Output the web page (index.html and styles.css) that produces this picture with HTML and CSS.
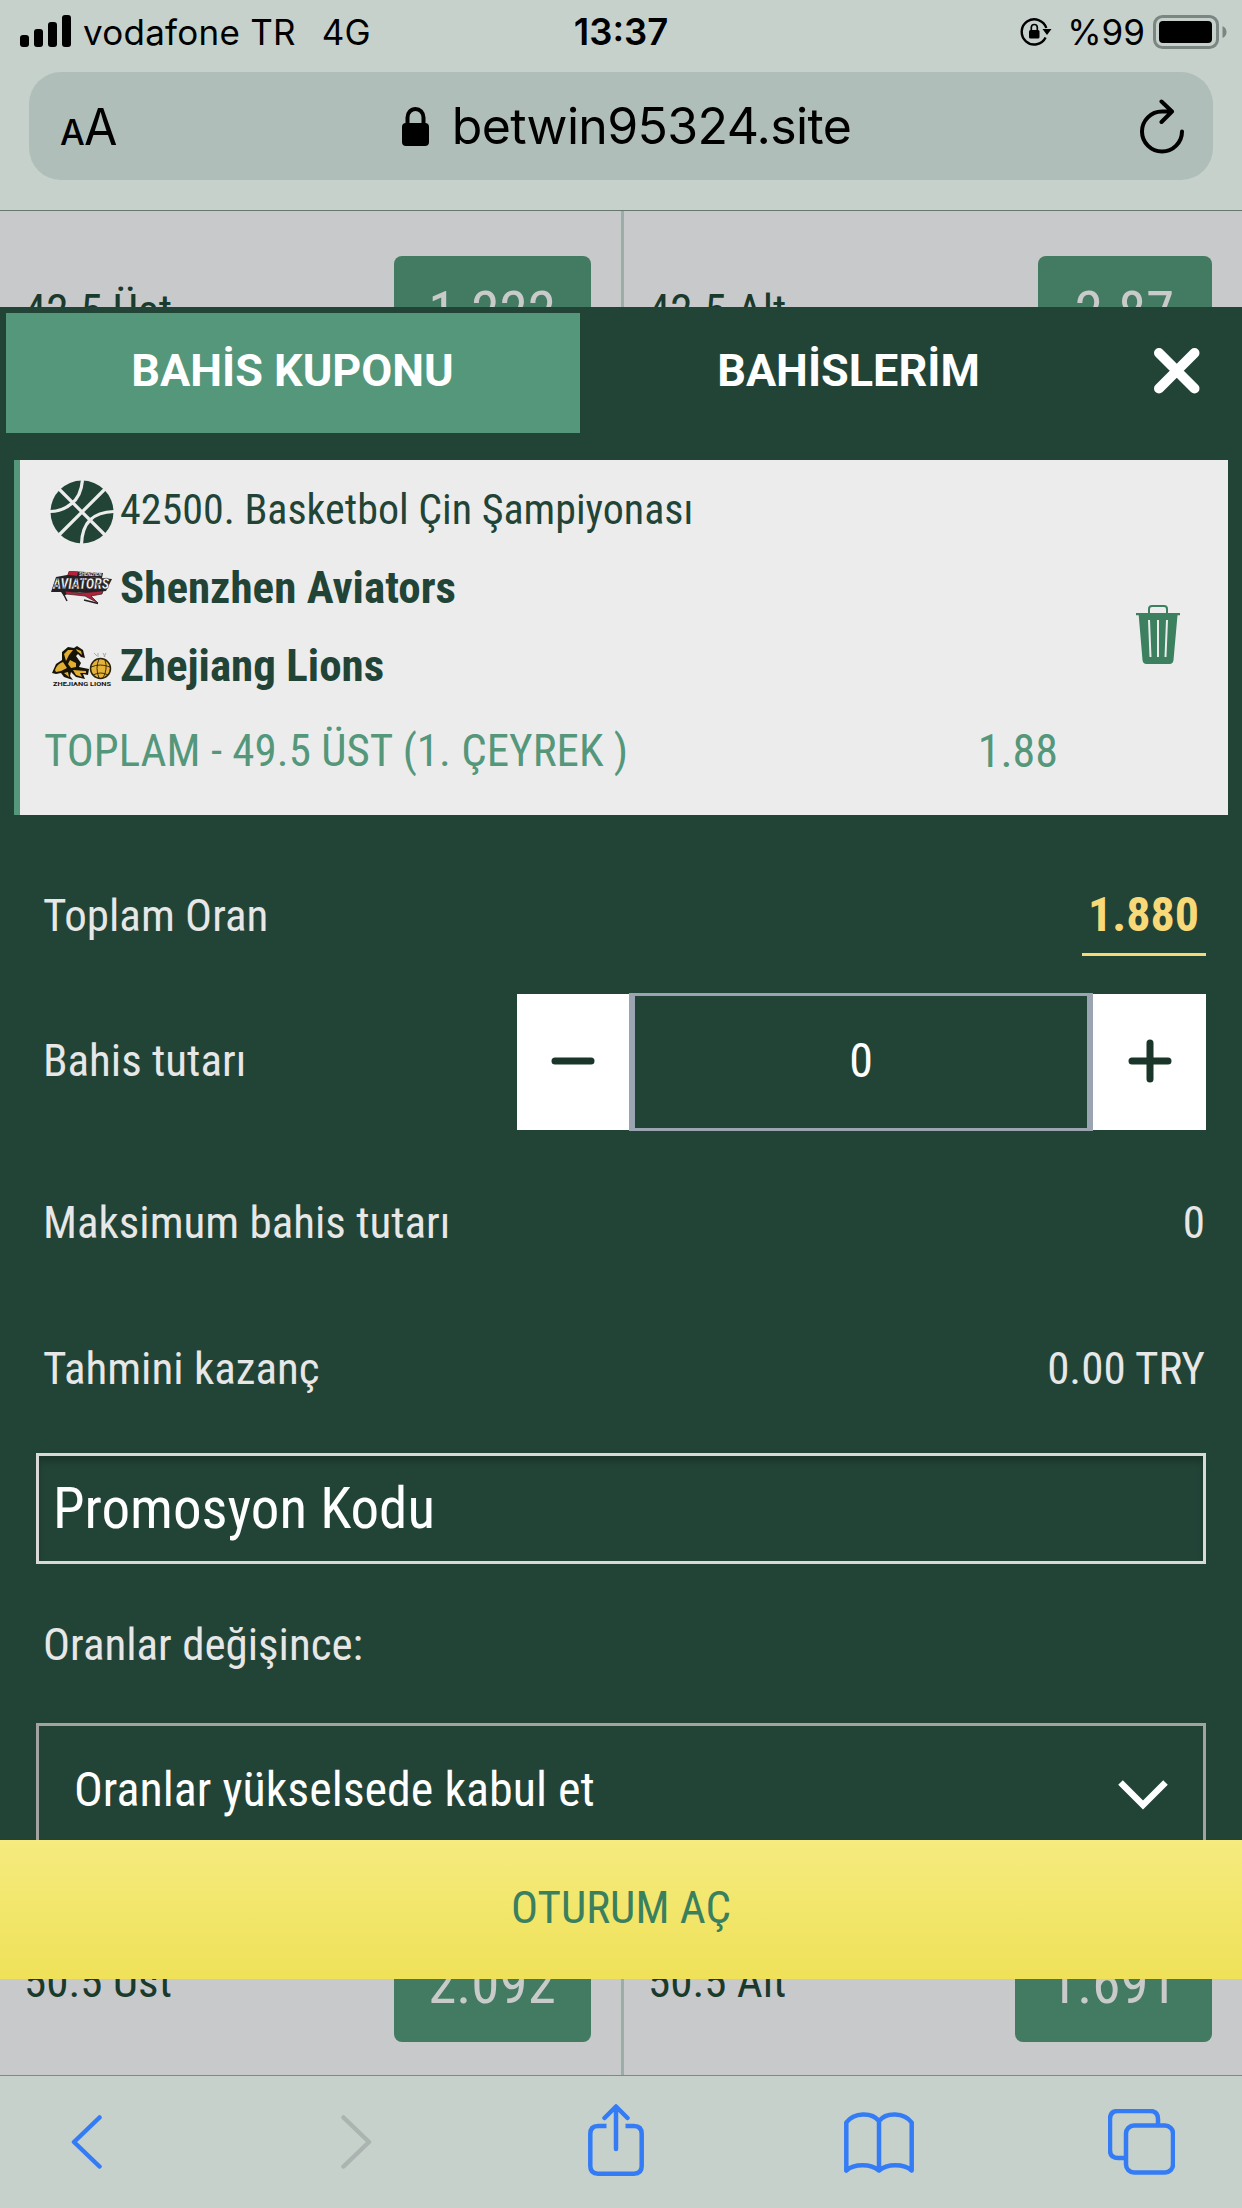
FILE: index.html
```
<!DOCTYPE html>
<html lang="tr">
<head>
<meta charset="utf-8">
<title>Bahis Kuponu</title>
<link rel="stylesheet" href="styles.css">
</head>
<body>
<header class="browser-top">
  <div class="status">
    <div class="status-left">
      <svg class="signal" width="51" height="32" viewBox="0 0 51 32"><rect y="20" width="9" height="12" rx="3"/><rect x="14" y="14" width="9" height="18" rx="3"/><rect x="28" y="7" width="9" height="25" rx="3"/><rect x="42" width="9" height="32" rx="3"/></svg>
      <span class="carrier">vodafone TR</span>
      <span class="network">4G</span>
    </div>
    <div class="clock">13:37</div>
    <div class="status-right">
      <svg width="32" height="29" viewBox="0 0 32 29"><path d="M25.6 20.5A12.6 12.6 0 1 1 26.3 11" fill="none" stroke="#000" stroke-width="2.4"/><path d="M22.500 12h9l-4.500 6z"/><rect x="9" y="13" width="10.500" height="8.500" rx="1.500"/><path d="M11.300 13.500v-3a3 3 0 0 1 6 0v3" fill="none" stroke="#000" stroke-width="1.700"/></svg>
      <span class="percent">%99</span>
      <svg width="74" height="34" viewBox="0 0 74 34"><rect x="1.500" y="1.500" width="63" height="31" rx="8" fill="none" stroke="#7b8581" stroke-width="3"/><rect x="6" y="6" width="53" height="22" rx="4"/><path d="M69.500 11q4 2 4 6t-4 6z" fill="#7b8581"/></svg>
    </div>
  </div>
  <div class="address">
    <span class="reader"><span class="reader-small">A</span><span class="reader-large">A</span></span>
    <div class="url">
      <svg width="27" height="39" viewBox="0 0 27 39"><rect y="16" width="27" height="23" rx="4"/><path d="M5.500 18V10.500a8 8.500 0 0 1 16 0V18" fill="none" stroke="#000" stroke-width="4"/></svg>
      <span>betwin95324.site</span>
    </div>
    <svg width="45" height="55" viewBox="0 0 45 55" fill="none" stroke="#000" stroke-width="4" stroke-linecap="round" stroke-linejoin="round"><path d="M42 32.500A20 20 0 1 1 22 12.500H31M21.500 2.500L32 12.500L21.500 23"/></svg>
  </div>
</header>

<main class="page">
  <div class="odds-row">
    <div class="odds-cell"><span class="odds-label">42.5 Üst</span><span class="odds-value">1.222</span></div>
    <div class="odds-cell"><span class="odds-label">42.5 Alt</span><span class="odds-value odds-value-short">2.87</span></div>
  </div>
  <div class="odds-row odds-row-last">
    <div class="odds-cell"><span class="odds-label">50.5 Üst</span><span class="odds-value">2.092</span></div>
    <div class="odds-cell"><span class="odds-label">50.5 Alt</span><span class="odds-value">1.691</span></div>
  </div>

  <section class="coupon">
    <nav class="tabs">
      <div class="tab tab-active">BAHİS KUPONU</div>
      <div class="tab tab-bets">BAHİSLERİM</div>
      <svg class="close" width="48" height="48" viewBox="0 0 48 48" stroke="#fff" stroke-width="10" stroke-linecap="round"><path d="M6 6L41.500 41.500M41.500 6L6 41.500"/></svg>
    </nav>

    <article class="bet">
      <div class="bet-main">
        <div class="bet-line bet-line-league">
          <svg class="bet-icon" width="64" height="64" viewBox="0 0 64 64"><circle cx="32" cy="32" r="31.500" fill="#224437"/><path d="M8 8L56 56M56 8L8 56M32.500 0Q31 17 21 24Q12 31.500 0 31.500M64 31.500Q48 32 40 40Q32 48 31.500 64" fill="none" stroke="#ececec" stroke-width="3.200"/></svg>
          <span class="league">42500. Basketbol Çin Şampiyonası</span>
        </div>
        <div class="bet-line bet-team">
          <svg class="bet-icon" width="62" height="34" viewBox="0 0 62 34"><path d="M18 0l34 2-1 5-35-2z" fill="#2c2024"/><path d="M18 0l9 .5-1 4.500-9-.5z" fill="#b3243a"/><path d="M5 6l11-2 45 4-4 8-2 4-18 2-18-1-6 4-3-4-10 0z" fill="#242023"/><path d="M14 20l15 2 23-2-1 3-11 2 7 7-13-7-19-2z" fill="#b3243a" stroke="#242023" stroke-width=".7"/><path d="M12 22l4 8M33 29l14 3.500" stroke="#242023" stroke-width="1.500"/><text x="2" y="18" class="aviators-word" textLength="56" lengthAdjust="spacingAndGlyphs">AVIATORS</text><text x="28" y="5" class="aviators-city">SHENZHEN</text></svg>
          <span>Shenzhen Aviators</span>
        </div>
        <div class="bet-line bet-line-away bet-team">
          <svg class="bet-icon" width="62" height="42" viewBox="0 0 62 42">
            <path d="M1 28L5 19L11 15L11 7L17 2L23 3L26 1L32 5L34 13L30 12L27 9L25 11L30 18L28 22L38 24L37 30L32 29L34 34L25 32L20 27L19 31L22 35L13 32L10 28L5 29Z" fill="#171308"/>
            <path d="M4 25q2-6 8-8l4 6-6 3-5 1zM13 9l4-4 5 0-4 5-3 6zM25 4l5 2 1 4-5-4zM19 15l6 3 0 4-5 1-3-4zM22 25l13 1 0 2-6 0 2 4-6-2zM13 28l4-1 1 5z" fill="#e2ae30"/>
            <circle cx="49.500" cy="23.500" r="10" fill="#e5b23a" stroke="#2a220d" stroke-width="1.500"/><path d="M40 22q9-4 19 0M42 30q8-4 15 0M48 14q-4 9 0 19M54 15q3 9-2 18" fill="none" stroke="#2a220d" stroke-width=".9"/><path d="M43 8l3 3M47 8v4M52 8l2 4M55 8l-2 4" stroke="#999" stroke-width=".8"/><text x="2" y="41" class="lions-word" textLength="58" lengthAdjust="spacingAndGlyphs">ZHEJIANG LIONS</text></svg>
          <span>Zhejiang Lions</span>
        </div>
        <div class="bet-pick"><span>TOPLAM - 49.5 ÜST (1. ÇEYREK )</span><span class="bet-odds">1.88</span></div>
      </div>
      <div class="bet-remove">
        <svg width="44" height="59" viewBox="0 0 44 59"><path d="M13 9V4q0-3 3-3h12q3 0 3 3v5" fill="none" stroke="#3c805f" stroke-width="2"/><path d="M0 8h44v2.200h-2.500L37.500 55q-.4 4-4 4h-23q-3.600 0-4-4L2.700 10.200H0z" fill="#3c805f"/><path d="M13 15l1.500 37M22 15v37M31 15l-1.500 37" stroke="#ececec" stroke-width="2"/></svg>
      </div>
    </article>

    <div class="form">
      <div class="row row-total"><span>Toplam Oran</span><span class="total">1.880</span></div>
      <div class="row row-stake">
        <span>Bahis tutarı</span>
        <div class="stepper">
          <div class="step"><svg width="44" height="44" viewBox="0 0 44 44" stroke="#1a3529" stroke-width="7" stroke-linecap="round"><path d="M4 22H40"/></svg></div>
          <div class="stake">0</div>
          <div class="step"><svg width="44" height="44" viewBox="0 0 44 44" stroke="#1a3529" stroke-width="7" stroke-linecap="round"><path d="M4 22H40M22 4V40"/></svg></div>
        </div>
      </div>
      <div class="row row-max"><span>Maksimum bahis tutarı</span><span class="amount">0</span></div>
      <div class="row row-win"><span>Tahmini kazanç</span><span class="amount">0.00 TRY</span></div>
      <div class="promo">Promosyon Kodu</div>
      <div class="row row-change"><span>Oranlar değişince:</span></div>
      <div class="select">
        <span>Oranlar yükselsede kabul et</span>
        <svg width="50" height="30" viewBox="0 0 50 30" fill="none" stroke="#fff" stroke-width="6.500"><path d="M2.500 2.500L25 25L47.500 2.500"/></svg>
      </div>
    </div>
    <div class="login">OTURUM AÇ</div>
  </section>
</main>

<footer class="toolbar">
  <svg class="tool-back" width="31" height="54" viewBox="0 0 31 54"><path d="M28.500 2.500L3 27L28.500 51.500"/></svg>
  <svg class="tool-forward" width="31" height="54" viewBox="0 0 31 54"><path d="M2.500 2.500L28 27L2.500 51.500"/></svg>
  <svg class="tool-share" width="56" height="72" viewBox="0 0 56 72"><path d="M18.500 22H10Q2.300 22 2.300 30V62Q2.300 69.700 10 69.700H46Q53.700 69.700 53.700 62V30Q53.700 22 46 22H37.500" stroke-linecap="butt"/><path d="M28 3V45M16.500 14L28 2.500L39.500 14"/></svg>
  <svg class="tool-book" width="70" height="61" viewBox="0 0 70 61"><path d="M2.300 58.500V10.500C10 0 28 0 35 9C42 0 60 0 67.700 10.500V58.500C60 51.500 43 51.500 35 58.500C27 51.500 10 51.500 2.300 58.500M35 9V58"/></svg>
  <svg class="tool-tabs" width="67" height="66" viewBox="0 0 67 66"><path d="M16 49H10Q2 49 2 41V10Q2 2 10 2H42Q50 2 50 10V16"/><rect x="18" y="16.500" width="47" height="47" rx="8"/></svg>
</footer>
</body>
</html>
```
FILE: styles.css
```
* { box-sizing: border-box; }

body {
  margin: 0;
  width: 1242px;
  height: 2208px;
  display: flex;
  flex-direction: column;
  overflow: hidden;
  background: #c6d1cc;
  font-family: "Roboto Condensed", Roboto, sans-serif;
  white-space: nowrap;
}

svg { display: block; flex: none; }

/* Browser chrome */
.browser-top {
  height: 211px;
  border-bottom: 1px solid #66776f;
  font-family: Inter, "Liberation Sans", sans-serif;
  color: #000;
}
.status {
  height: 72px;
  padding: 0 15px 9px 20px;
  display: grid;
  grid-template-columns: 1fr auto 1fr;
  align-items: center;
  font-size: 35px;
  line-height: 62px;
}
.status-left, .status-right { display: flex; align-items: center; }
.status-right { justify-content: flex-end; }
.signal { margin: 0 12px 2px 0; }
.carrier { letter-spacing: .25px; }
.network { margin-left: 26px; }
.clock { font-size: 36.5px; font-weight: 600; margin-left: -5px; }
.percent { margin: 0 8px 0 15px; }
.address {
  height: 108px;
  margin: 0 29px;
  padding: 0 28px 0 31px;
  border-radius: 32px;
  background: #b0beb9;
  display: flex;
  align-items: center;
  justify-content: space-between;
}
.reader { width: 60px; display: flex; align-items: baseline; }
.reader-small { width: 24px; font-size: 35px; font-weight: 500; }
.reader-large { font-size: 50.5px; transform: scaleX(.96); transform-origin: left; }
.url {
  display: flex;
  align-items: center;
  gap: 23px;
  font-size: 50px;
  letter-spacing: -.65px;
  margin-left: -7px;
}

/* Odds list behind the coupon */
.page {
  position: relative;
  height: 1864px;
  padding: 45px 0 33px;
  background: linear-gradient(90deg, transparent 621px, #9aada6 621px, #9aada6 624px, transparent 624px) #c8c9cb;
  display: flex;
  flex-direction: column;
  justify-content: space-between;
}
.odds-row { display: grid; grid-template-columns: 621px 621px; }
.odds-cell {
  height: 115px;
  padding: 0 30px 0 24px;
  display: flex;
  justify-content: space-between;
}
.odds-cell:nth-child(2) { padding-left: 27px; }
.odds-label { font-size: 45px; line-height: 110px; color: #1a3a2c; }
.odds-value {
  width: 197px;
  padding-right: 1px;
  border-radius: 8px;
  background: #437a62;
  color: #c9cbca;
  font-size: 57px;
  line-height: 113px;
  text-align: center;
}
.odds-value-short { width: 174px; }

/* Coupon panel */
.coupon {
  position: absolute;
  top: 96px;
  left: 0;
  width: 1242px;
  height: 1672px;
  background: #224437;
  display: flex;
  flex-direction: column;
}
.tabs { height: 153px; padding: 6px 41px 0 6px; display: flex; }
.tab {
  height: 120px;
  font: 700 45px/116px Roboto, sans-serif;
  text-align: center;
  color: #fff;
}
.tab-active { width: 574px; padding-right: 1px; }
.tab-active { background: #54977b; }
.tab-bets { flex: 1; padding-right: 36px; }
.close { margin-top: 34px; }

.bet {
  height: 355px;
  margin: 0 14px;
  padding-top: 11px;
  border-left: 6px solid #54977b;
  background: #ececec;
  color: #224437;
  display: flex;
}
.bet-main { width: 1038px; }
.bet-line {
  height: 78px;
  line-height: 78px;
  padding-left: 31px;
  display: flex;
  align-items: center;
  gap: 5px;
}
.bet-line-league { padding-left: 30px; }
.bet-line-league .bet-icon { margin-top: 3px; }
.bet-line-away { height: 77px; line-height: 77px; }
.bet-icon { overflow: visible; }
.league { font-size: 42px; margin-left: 1px; }
.bet-team { font-size: 45px; font-weight: 700; gap: 7px; }
.bet-pick {
  padding-left: 24px;
  display: flex;
  justify-content: space-between;
  font-size: 45px;
  line-height: 94px;
  color: #54977b;
}
.bet-odds { font-size: 46px; }
.bet-remove { flex: 1; padding: 134px 0 0 78px; }
.aviators-word { font: italic 900 14px Roboto, sans-serif; fill: #fff; stroke: #242023; stroke-width: .5px; }
.aviators-city { font: italic 700 4.5px Roboto, sans-serif; fill: #ddd; }
.lions-word { font: 700 5px Roboto, sans-serif; fill: #171308; }

.form {
  height: 1025px;
  padding: 24px 36px 0;
  overflow: hidden;
  color: #e6e7e6;
  font-size: 45px;
}
.row { display: flex; align-items: center; justify-content: space-between; padding-left: 7px; }
.row-total { height: 152px; }
.total {
  height: 80px;
  margin-top: 2px;
  padding: 0 7px 0 6px;
  border-bottom: 3px solid #f8d977;
  color: #f8d977;
  font-size: 48px;
  font-weight: 700;
  line-height: 78px;
}
.row-stake { height: 138px; margin-top: 2px; }
.row-stake > span { margin-bottom: 3px; }
.amount { margin-right: 1px; }
.stepper { width: 689px; display: flex; align-items: center; }
.step {
  width: 112px;
  height: 136px;
  background: #fff;
  display: flex;
  align-items: center;
  justify-content: center;
  padding-bottom: 3px;
}
.step:last-child { width: 113px; }
.stake {
  flex: 1;
  height: 138px;
  border: 3px solid #9ba5b1;
  border-width: 3px 6px;
  color: #fff;
  font-size: 48px;
  line-height: 129px;
  text-align: center;
}
.row-max { height: 182px; }
.row-win { height: 110px; }
.promo {
  height: 111px;
  margin-top: 30px;
  padding-left: 14px;
  border: 3px solid #d8d9d8;
  box-shadow: inset 0 6px 6px rgba(0, 0, 0, .2);
  color: #fff;
  font-size: 57px;
  line-height: 106px;
}
.row-change { height: 159px; padding-top: 1px; }
.select {
  height: 132px;
  padding: 0 35px;
  border: 3px solid #a3a4a1;
  display: flex;
  align-items: center;
  justify-content: space-between;
  color: #fff;
  font-size: 48px;
}
.select svg { margin-top: 11px; }
.login {
  height: 139px;
  margin-top: auto;
  background: linear-gradient(#f5eb7f, #efe158);
  color: #3a805f;
  font-size: 45px;
  line-height: 135px;
  text-align: center;
}

/* Browser toolbar */
.toolbar {
  height: 133px;
  border-top: 1px solid #7e8a86;
  display: flex;
  align-items: center;
  fill: none;
  stroke: #347cf6;
  stroke-width: 4.500px;
  stroke-linecap: round;
  stroke-linejoin: round;
}
.tool-back { margin-left: 71px; }
.tool-forward { margin-left: 239px; stroke: #abb4b0; }
.tool-share { margin: 0 0 4px 216px; }
.tool-book { margin-left: 200px; }
.tool-tabs { margin-left: 194px; }
```
